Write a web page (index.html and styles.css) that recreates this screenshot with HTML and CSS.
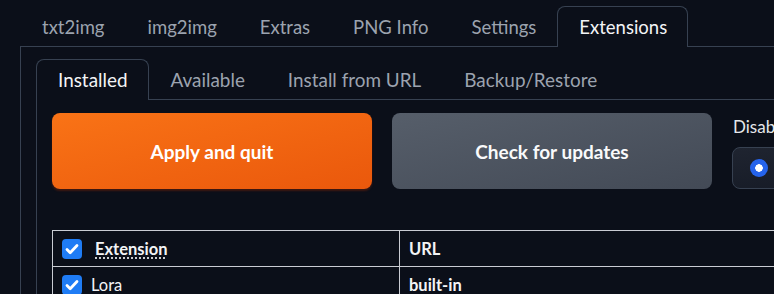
FILE: index.html
```html
<!DOCTYPE html>
<html lang="en">
<head>
<meta charset="utf-8">
<title>Extensions</title>
<link rel="stylesheet" href="styles.css">
</head>
<body>
<div class="app">
  <nav class="tabs top-tabs">
    <button class="tab">txt2img</button>
    <button class="tab">img2img</button>
    <button class="tab">Extras</button>
    <button class="tab">PNG Info</button>
    <button class="tab">Settings</button>
    <button class="tab active">Extensions</button>
  </nav>
  <div class="panel outer">
    <nav class="tabs sub-tabs">
      <button class="tab active">Installed</button>
      <button class="tab">Available</button>
      <button class="tab">Install from URL</button>
      <button class="tab">Backup/Restore</button>
    </nav>
    <div class="panel inner">
      <div class="actions">
        <button class="btn primary">Apply and quit</button>
        <button class="btn secondary">Check for updates</button>
        <div class="radio-group">
          <span class="group-label">Disable all extensions</span>
          <div class="radio-box">
            <label class="radio-item"><span class="radio checked"></span><span>none</span></label>
            <label class="radio-item"><span class="radio"></span><span>extra</span></label>
            <label class="radio-item"><span class="radio"></span><span>all</span></label>
          </div>
        </div>
      </div>
      <table class="ext-table">
        <colgroup><col class="c1"><col class="c2"><col class="c3"></colgroup>
        <thead>
          <tr>
            <th><span class="cell-in"><span class="check"></span><abbr class="hdr" title="Use checkbox to enable the extension">Extension</abbr></span></th>
            <th>URL</th>
            <th>Branch</th>
          </tr>
        </thead>
        <tbody>
          <tr>
            <td><span class="cell-in"><span class="check"></span><span class="name">Lora</span></span></td>
            <td class="bold">built-in</td>
            <td>None</td>
          </tr>
        </tbody>
      </table>
    </div>
  </div>
</div>
</body>
</html>
```
FILE: styles.css
```css
html, body {
  margin: 0;
  padding: 0;
  background: #0b0f19;
  overflow: hidden;
}
body {
  font-family: Lato, "Noto Sans", sans-serif;
  color: #e5e7eb;
  width: 774px;
  height: 294px;
}
.app {
  width: 1200px;
  padding-top: 6px;
}
.tabs {
  display: flex;
  align-items: flex-end;
  height: 40px;
}
.top-tabs {
  padding-left: 20px;
}
.tab {
  font-family: inherit;
  font-size: 18.5px;
  color: #9ca3af;
  background: transparent;
  border: 1px solid transparent;
  border-bottom: none;
  border-radius: 8px 8px 0 0;
  height: 41px;
  padding: 0 20px 1px 21px;
  margin-bottom: -1px;
  cursor: pointer;
}
.sub-tabs .tab {
  font-size: 18.9px;
}
.tab.active {
  color: #f3f4f6;
  border-color: #374151;
  background: #0b0f19;
  position: relative;
  z-index: 1;
}
.panel {
  border-top: 1px solid #374151;
  border-left: 1px solid #374151;
}
.outer {
  margin-left: 20px;
  padding: 12px 0 0 15px;
  height: 400px;
}
.inner {
  padding: 13px 0 0 15px;
  height: 400px;
}
.actions {
  display: flex;
  gap: 20px;
  height: 76px;
}
.btn {
  font-family: inherit;
  font-weight: 700;
  font-size: 19px;
  width: 320px;
  border: none;
  border-radius: 8px;
  color: #fff;
  padding: 0;
}
.primary {
  background: linear-gradient(to bottom right, #f97316, #ea580c);
  box-shadow: 0 2px 2px rgba(160, 40, 0, 0.35);
}
.secondary {
  background: linear-gradient(to bottom right, #565e6a, #434a56);
  color: #f9fafb;
}
.radio-group {
  display: flex;
  flex-direction: column;
  gap: 10px;
  padding-top: 3px;
}
.group-label {
  font-size: 17px;
  color: #e5e7eb;
  padding-left: 1px;
}
.radio-box {
  display: flex;
  gap: 16px;
  height: 41px;
  width: 360px;
  border: 1px solid #374151;
  border-radius: 8px;
  background: linear-gradient(to bottom right, #1f2430, #111621);
  align-items: center;
  padding-left: 17px;
}
.radio-item {
  display: flex;
  align-items: center;
  gap: 8px;
  font-size: 17px;
}
.radio {
  width: 18px;
  height: 18px;
  border-radius: 50%;
  background: #374151;
  box-sizing: border-box;
}
.radio.checked {
  background: radial-gradient(circle, #fff 0 3.5px, #2563eb 4px);
}
.ext-table {
  margin-top: 41px;
  border-collapse: collapse;
  table-layout: fixed;
  width: 1000px;
}
.c1 { width: 347px; }
.c2 { width: 400px; }
.ext-table th, .ext-table td {
  border: 1px solid #c9ccd3;
  text-align: left;
  padding: 0 9px;
  height: 35px;
  font-size: 16.5px;
  color: #f3f4f6;
}
.ext-table th {
  font-weight: 700;
}
.bold { font-weight: 700; }
.cell-in {
  display: flex;
  align-items: center;
  gap: 9px;
}
.check {
  width: 20px;
  height: 20px;
  border-radius: 4px;
  background: #1f7cf5 url("data:image/svg+xml,%3Csvg xmlns='http://www.w3.org/2000/svg' viewBox='0 0 20 20'%3E%3Cpath d='M5 10.5l3.2 3.2L15 6.5' fill='none' stroke='white' stroke-width='2.8' stroke-linecap='round' stroke-linejoin='round'/%3E%3C/svg%3E") center/100% no-repeat;
  flex: none;
}
.hdr {
  text-decoration: underline dotted;
  text-underline-offset: 3px;
  margin-left: 4px;
}
.name { font-weight: 400; }
```
